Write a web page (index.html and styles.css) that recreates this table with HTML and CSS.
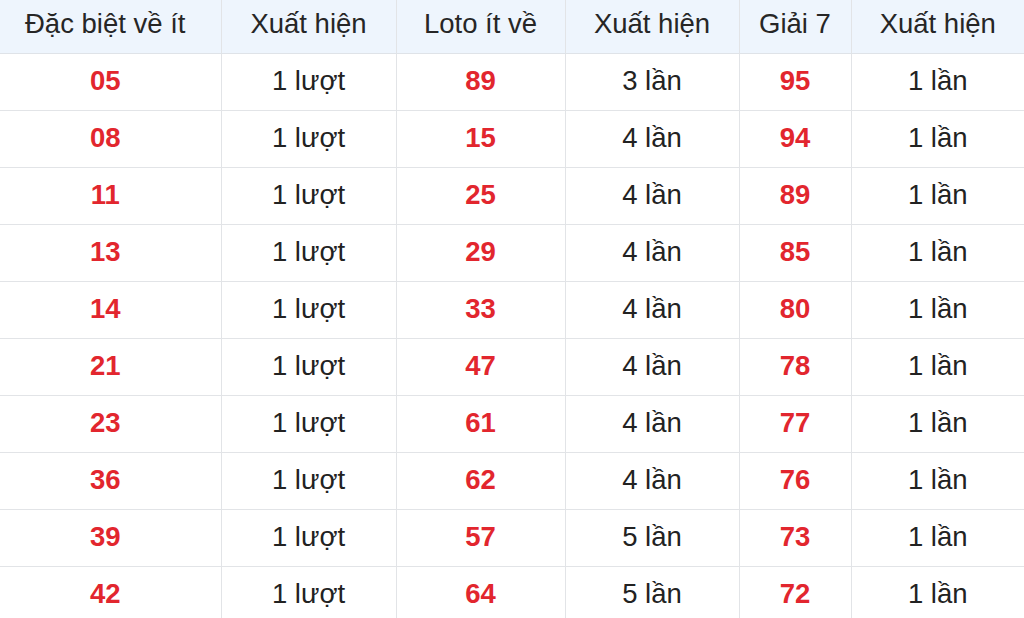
FILE: index.html
```html
<!DOCTYPE html>
<html lang="vi">
<head>
<meta charset="utf-8">
<link rel="stylesheet" href="styles.css">
</head>
<body>
<table class="stats">
  <colgroup>
    <col class="c1"><col class="c2"><col class="c3"><col class="c4"><col class="c5"><col class="c6">
  </colgroup>
  <thead>
    <tr><th class="first">Đặc biệt về ít</th><th>Xuất hiện</th><th>Loto ít về</th><th>Xuất hiện</th><th>Giải 7</th><th>Xuất hiện</th></tr>
  </thead>
  <tbody>
    <tr><td class="num first">05</td><td>1 lượt</td><td class="num">89</td><td>3 lần</td><td class="num">95</td><td>1 lần</td></tr>
    <tr><td class="num first">08</td><td>1 lượt</td><td class="num">15</td><td>4 lần</td><td class="num">94</td><td>1 lần</td></tr>
    <tr><td class="num first">11</td><td>1 lượt</td><td class="num">25</td><td>4 lần</td><td class="num">89</td><td>1 lần</td></tr>
    <tr><td class="num first">13</td><td>1 lượt</td><td class="num">29</td><td>4 lần</td><td class="num">85</td><td>1 lần</td></tr>
    <tr><td class="num first">14</td><td>1 lượt</td><td class="num">33</td><td>4 lần</td><td class="num">80</td><td>1 lần</td></tr>
    <tr><td class="num first">21</td><td>1 lượt</td><td class="num">47</td><td>4 lần</td><td class="num">78</td><td>1 lần</td></tr>
    <tr><td class="num first">23</td><td>1 lượt</td><td class="num">61</td><td>4 lần</td><td class="num">77</td><td>1 lần</td></tr>
    <tr><td class="num first">36</td><td>1 lượt</td><td class="num">62</td><td>4 lần</td><td class="num">76</td><td>1 lần</td></tr>
    <tr><td class="num first">39</td><td>1 lượt</td><td class="num">57</td><td>5 lần</td><td class="num">73</td><td>1 lần</td></tr>
    <tr><td class="num first">42</td><td>1 lượt</td><td class="num">64</td><td>5 lần</td><td class="num">72</td><td>1 lần</td></tr>
  </tbody>
</table>
</body>
</html>
```
FILE: styles.css
```css
html, body {
  margin: 0;
  padding: 0;
  background: #ffffff;
  overflow: hidden;
}
.stats {
  width: 1024px;
  table-layout: fixed;
  border-collapse: collapse;
  font-family: "Liberation Sans", Arial, sans-serif;
  font-size: 27.5px;
  line-height: 32px;
  color: #222222;
}
.c1 { width: 221px; }
.c2 { width: 175px; }
.c3 { width: 169px; }
.c4 { width: 174px; }
.c5 { width: 112px; }
.c6 { width: 173px; }
.stats th, .stats td {
  text-align: center;
  border-left: 1px solid #e2e4e7;
  border-bottom: 1px solid #e2e4e7;
  white-space: nowrap;
  box-sizing: border-box;
}
.stats th {
  height: 53px;
  padding: 8px 0 12px;
  background: #eef5fd;
  font-weight: normal;
  color: #262626;
  border-bottom: 1px solid #dfe3e8;
}
.stats td {
  height: 57px;
  padding: 11px 0 13px;
}
.stats th.first, .stats td.first {
  border-left: none;
  padding-right: 10px;
}
.stats .num {
  color: #e2262e;
  font-weight: bold;
}
```
